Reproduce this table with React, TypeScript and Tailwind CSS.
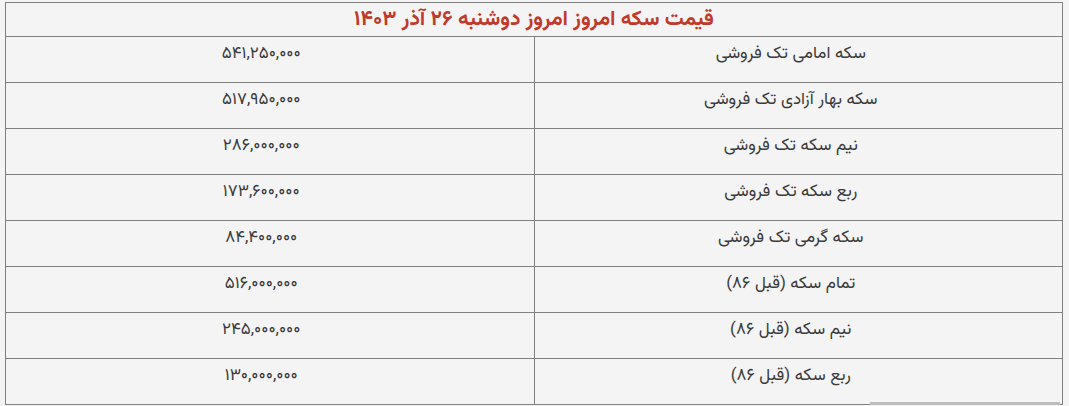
import React from "react";

const rows: [string, string][] = [
  ["سکه امامی تک فروشی", "۵۴۱,۲۵۰,۰۰۰"],
  ["سکه بهار آزادی تک فروشی", "۵۱۷,۹۵۰,۰۰۰"],
  ["نیم سکه تک فروشی", "۲۸۶,۰۰۰,۰۰۰"],
  ["ربع سکه تک فروشی", "۱۷۳,۶۰۰,۰۰۰"],
  ["سکه گرمی تک فروشی", "۸۴,۴۰۰,۰۰۰"],
  ["تمام سکه (قبل ۸۶)", "۵۱۶,۰۰۰,۰۰۰"],
  ["نیم سکه (قبل ۸۶)", "۲۴۵,۰۰۰,۰۰۰"],
  ["ربع سکه (قبل ۸۶)", "۱۳۰,۰۰۰,۰۰۰"],
];

export default function App() {
  return (
    <div
      dir="rtl"
      className="relative w-[1069px] h-[406px] overflow-hidden bg-[#f4f4f4] pt-[2px] pl-[5px] pr-[6px] text-[#3a3a3a] [font-family:'Vazirmatn','DejaVu_Sans',sans-serif]"
    >
      <table className="w-[1058px] border-collapse table-fixed">
        <thead>
          <tr className="h-[34px]">
            <th
              colSpan={2}
              className="border border-[#808080] text-center align-middle text-[21px] font-bold text-[#c0392b] leading-[26px]"
            >
              قیمت سکه امروز امروز دوشنبه ۲۶ آذر ۱۴۰۳
            </th>
          </tr>
        </thead>
        <tbody>
          {rows.map(([name, price]) => (
            <tr key={name} className="h-[46px]">
              <td className="w-[528px] border border-[#808080] text-center align-top pt-[4px] pr-[15px] text-[17px] font-normal leading-[26px]">
                {name}
              </td>
              <td className="border border-[#808080] text-center align-top pt-[4px] pr-[17px] text-[17px] tracking-[0.7px] font-normal leading-[26px]">
                {price}
              </td>
            </tr>
          ))}
        </tbody>
      </table>
      <div className="absolute left-[870px] top-[402px] h-[3px] w-[190px] bg-[#bdbdbd]" />
    </div>
  );
}
